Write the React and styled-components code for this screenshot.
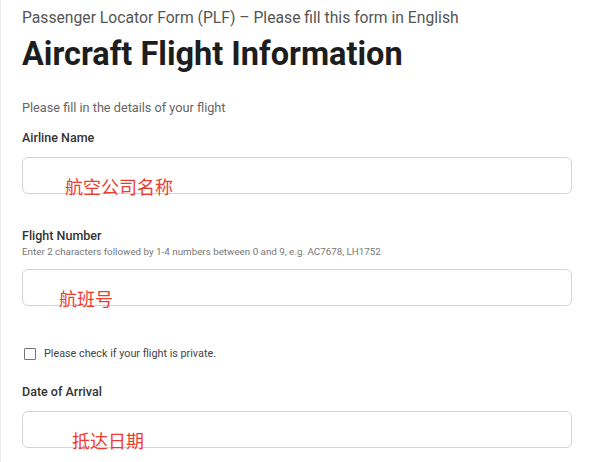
import React from 'react';
import styled, { createGlobalStyle } from 'styled-components';

const GlobalStyle = createGlobalStyle`
  html, body {
    margin: 0;
    padding: 0;
    background: #fff;
  }
  body {
    font-family: Roboto, "Noto Sans", "Liberation Sans", sans-serif;
    color: #222;
  }
`

const Page = styled.div`
  width: 600px;
  height: 462px;
  box-sizing: border-box;
  border-left: 1px solid #ececec;
  padding: 8px 28px 0 21px;
  overflow: hidden;
  display: flex;
  flex-direction: column;
`

const Kicker = styled.div`
  font-size: 15.7px;
  line-height: 20px;
  color: #555;
`

const Title = styled.h1`
  margin: 8px 0 0;
  font-size: 32.5px;
  line-height: 36px;
  font-weight: 700;
  color: #1d1d1d;
`

const Intro = styled.p`
  margin: 28px 0 0;
  font-size: 12.7px;
  line-height: 16px;
  color: #666;
`

const Field = styled.div`
  display: flex;
  flex-direction: column;
  margin-top: ${p => p.$top}px;
`

const Label = styled.label`
  font-size: 12.5px;
  line-height: 16px;
  font-weight: 500;
  color: #333;
`

const Hint = styled.div`
  font-size: 9.8px;
  line-height: 12px;
  color: #777;
  margin-top: 2px;
`

const InputWrap = styled.div`
  position: relative;
  margin-top: ${p => p.$top}px;
`

const Input = styled.div`
  height: 37px;
  box-sizing: border-box;
  border: 1px solid #d4d4d4;
  border-radius: 6px;
  background: #fff;
`

const Note = styled.span`
  position: absolute;
  left: ${p => p.$left}px;
  top: 18px;
  font-family: "Noto Sans CJK SC", sans-serif;
  font-size: 18px;
  line-height: 22px;
  color: #ec3b2f;
  white-space: nowrap;
`

const CheckRow = styled.div`
  display: flex;
  align-items: center;
  gap: 8px;
  margin-top: 41px;
  padding-left: 2px;
`

const Box = styled.span`
  width: 10px;
  height: 10px;
  border: 1px solid #777;
  border-radius: 1px;
`

const CheckText = styled.span`
  font-size: 10.8px;
  line-height: 14px;
  color: #444;
`

export default function App() {
  return (
    <>
      <GlobalStyle />
      <Page>
        <Kicker>Passenger Locator Form (PLF) – Please fill this form in English</Kicker>
        <Title>Aircraft Flight Information</Title>
        <Intro>Please fill in the details of your flight</Intro>

        <Field $top={14}>
          <Label>Airline Name</Label>
          <InputWrap $top={11}>
            <Input />
            <Note $left={43}>航空公司名称</Note>
          </InputWrap>
        </Field>

        <Field $top={34}>
          <Label>Flight Number</Label>
          <Hint>Enter 2 characters followed by 1-4 numbers between 0 and 9, e.g. AC7678, LH1752</Hint>
          <InputWrap $top={11}>
            <Input />
            <Note $left={37}>航班号</Note>
          </InputWrap>
        </Field>

        <CheckRow>
          <Box />
          <CheckText>Please check if your flight is private.</CheckText>
        </CheckRow>

        <Field $top={23}>
          <Label>Date of Arrival</Label>
          <InputWrap $top={11}>
            <Input />
            <Note $left={50}>抵达日期</Note>
          </InputWrap>
        </Field>
      </Page>
    </>
  );
}
